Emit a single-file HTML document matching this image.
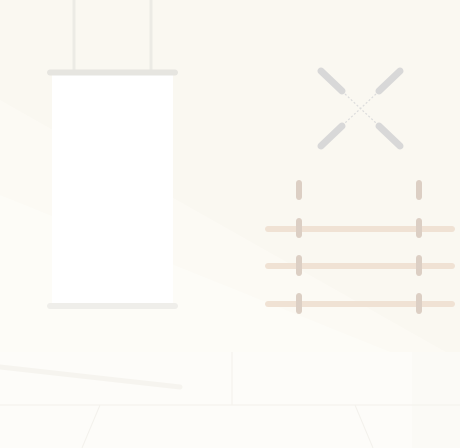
<!DOCTYPE html>
<html><head><style>html,body{margin:0;padding:0;width:460px;height:448px;overflow:hidden;background:#faf8f1}</style></head>
<body>
<svg width="460" height="448" viewBox="0 0 460 448" xmlns="http://www.w3.org/2000/svg">
<rect width="460" height="448" fill="#faf8f1"/>
<polygon points="0,100 460,360 460,448 0,448" fill="#fcfaf5" opacity="0.8"/>
<polygon points="0,195 460,380 460,448 0,448" fill="#fdfcf8" opacity="0.8"/>
<rect x="0" y="352" width="460" height="96" fill="#fdfcf9"/>
<rect x="412" y="352" width="48" height="96" fill="#fbfaf6"/>
<line x1="0" y1="405" x2="460" y2="405" stroke="#f3f1ec" stroke-width="1"/>
<line x1="232" y1="352" x2="232" y2="405" stroke="#f3f1ec" stroke-width="1"/>
<line x1="100" y1="405" x2="82" y2="448" stroke="#f3f1ec" stroke-width="1"/>
<line x1="355" y1="405" x2="373" y2="448" stroke="#f3f1ec" stroke-width="1"/>
<line x1="0" y1="367" x2="180" y2="387" stroke="#f6f4ef" stroke-width="5" stroke-linecap="round"/>
<line x1="74" y1="0" x2="74" y2="70" stroke="#ecebe5" stroke-width="3"/>
<line x1="151" y1="0" x2="151" y2="70" stroke="#ecebe5" stroke-width="3"/>
<rect x="52" y="75" width="121" height="229" fill="#ffffff"/>
<line x1="50" y1="72.5" x2="175" y2="72.5" stroke="#e6e5e0" stroke-width="6" stroke-linecap="round"/>
<line x1="50" y1="306" x2="175" y2="306" stroke="#efeeea" stroke-width="6" stroke-linecap="round"/>
<g stroke="#d8d8d8" stroke-width="7" stroke-linecap="round">
<line x1="321" y1="71" x2="342" y2="91"/>
<line x1="400" y1="71" x2="379" y2="91"/>
<line x1="321" y1="146" x2="342" y2="126"/>
<line x1="400" y1="146" x2="379" y2="126"/>
</g>
<g stroke="#dcdcdc" stroke-width="1.2" stroke-dasharray="2 2">
<line x1="345" y1="94" x2="376" y2="123"/>
<line x1="376" y1="94" x2="345" y2="123"/>
</g>
<g stroke="#f0e2d4" stroke-width="6" stroke-linecap="round">
<line x1="268" y1="229" x2="452" y2="229"/>
<line x1="268" y1="266" x2="452" y2="266"/>
<line x1="268" y1="304" x2="452" y2="304"/>
</g>
<g stroke="#dccfc4" stroke-width="6" stroke-linecap="round">
<line x1="299" y1="183" x2="299" y2="197"/>
<line x1="299" y1="221" x2="299" y2="235"/>
<line x1="299" y1="258" x2="299" y2="273"/>
<line x1="299" y1="296" x2="299" y2="311"/>
<line x1="419" y1="183" x2="419" y2="197"/>
<line x1="419" y1="221" x2="419" y2="235"/>
<line x1="419" y1="258" x2="419" y2="273"/>
<line x1="419" y1="296" x2="419" y2="311"/>
</g>
</svg>
</body></html>
